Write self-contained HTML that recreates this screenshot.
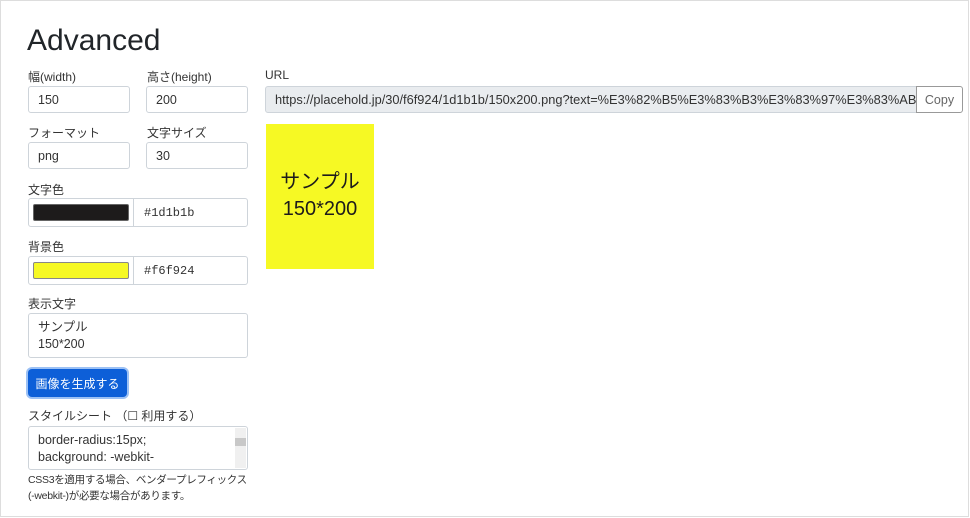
<!DOCTYPE html>
<html><head><meta charset="utf-8"><style>
*{box-sizing:border-box;margin:0;padding:0}
body{width:970px;height:518px;background:#fff;font-family:"Liberation Sans","Noto Sans CJK JP",sans-serif;color:#212529;position:relative;overflow:hidden}
.frame{position:absolute;left:0;top:0;width:969px;height:517px;border:1px solid #ddd}
.a{position:absolute}
.lbl{font-size:12px;color:#333}
.inp{border:1px solid #ced4da;border-radius:3px;background:#fff;font-size:12.5px;padding-left:9px;display:flex;align-items:center;color:#333}
</style></head><body>
<div class="frame"></div>
<div class="a" style="left:27px;top:24px;font-size:30px;color:#212529">Advanced</div>
<div class="a lbl" style="left:28px;top:68px">幅(width)</div>
<div class="a lbl" style="left:147px;top:68px">高さ(height)</div>
<div class="a inp" style="left:28px;top:86px;width:102px;height:27px">150</div>
<div class="a inp" style="left:146px;top:86px;width:102px;height:27px">200</div>
<div class="a lbl" style="left:28px;top:124px">フォーマット</div>
<div class="a lbl" style="left:147px;top:124px">文字サイズ</div>
<div class="a inp" style="left:28px;top:142px;width:102px;height:27px">png</div>
<div class="a inp" style="left:146px;top:142px;width:102px;height:27px">30</div>
<div class="a lbl" style="left:28px;top:181px">文字色</div>
<div class="a inp" style="left:28px;top:198px;width:220px;height:29px;padding:0">
 <div style="width:105px;height:100%;border-right:1px solid #ced4da;display:flex;align-items:center;justify-content:center"><div style="width:96px;height:17px;background:#1d1b1b;border:1px solid #666;border-radius:2px"></div></div>
 <div style="padding-left:10px;font-family:'Liberation Mono',monospace;font-size:12px">#1d1b1b</div></div>
<div class="a lbl" style="left:28px;top:238px">背景色</div>
<div class="a inp" style="left:28px;top:256px;width:220px;height:29px;padding:0">
 <div style="width:105px;height:100%;border-right:1px solid #ced4da;display:flex;align-items:center;justify-content:center"><div style="width:96px;height:17px;background:#f6f924;border:1px solid #888;border-radius:2px"></div></div>
 <div style="padding-left:10px;font-family:'Liberation Mono',monospace;font-size:12px">#f6f924</div></div>
<div class="a lbl" style="left:28px;top:295px">表示文字</div>
<div class="a inp" style="left:28px;top:313px;width:220px;height:45px;align-items:flex-start;padding-top:5px;line-height:17px;font-size:12.5px">サンプル<br>150*200</div>
<div class="a" style="left:28px;top:369px;width:99px;height:28px;background:#0d5fd8;border-radius:4px;box-shadow:0 0 0 2px #9cc1f5;color:#fff;font-size:12px;display:flex;align-items:center;justify-content:center">画像を生成する</div>
<div class="a lbl" style="left:28px;top:407px">スタイルシート （☐ 利用する）</div>
<div class="a inp" style="left:28px;top:426px;width:220px;height:44px;align-items:flex-start;padding-top:5px;line-height:17px;font-size:12.5px;overflow:hidden">border-radius:15px;<br>background: -webkit-
 <div style="position:absolute;right:1px;top:1px;width:11px;height:40px;background:#f0f0f0"><div style="margin-top:10px;height:8px;background:#c8c8c8"></div></div></div>
<div class="a" style="left:28px;top:472px;font-size:10.5px;line-height:16px;color:#333;letter-spacing:-0.3px">CSS3を適用する場合、ベンダープレフィックス<br>(-webkit-)が必要な場合があります。</div>
<div class="a lbl" style="left:265px;top:68px">URL</div>
<div class="a inp" style="left:265px;top:86px;width:652px;height:27px;background:#e9ecef;overflow:hidden;white-space:nowrap;border-radius:3px 0 0 3px;font-size:12.8px">https://placehold.jp/30/f6f924/1d1b1b/150x200.png?text=%E3%82%B5%E3%83%B3%E3%83%97%E3%83%AB</div>
<div class="a" style="left:916px;top:86px;width:47px;height:27px;border:1px solid #999;border-radius:0 3px 3px 0;font-size:12.5px;color:#666;display:flex;align-items:center;justify-content:center;background:#fff">Copy</div>
<div class="a" style="left:266px;top:124px;width:108px;height:145px;background:#f6f924;color:#1d1b1b;font-size:20px;line-height:27px;display:flex;align-items:center;justify-content:center;text-align:center;padding-bottom:2px">サンプル<br>150*200</div>
</body></html>
